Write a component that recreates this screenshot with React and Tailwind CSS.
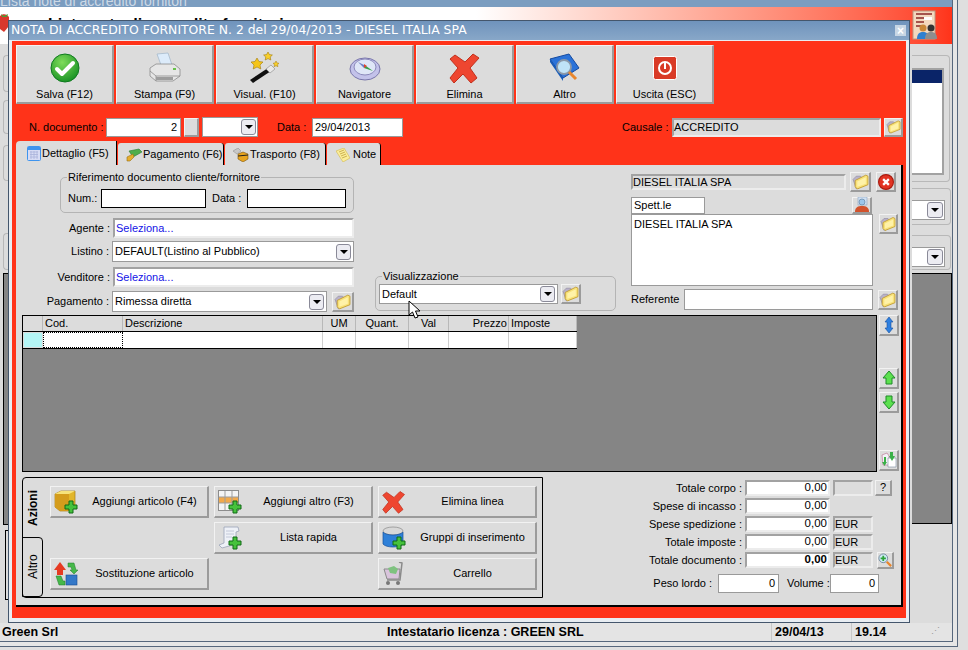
const raised = "border-t border-l border-t-[#f2f2f2] border-l-[#f2f2f2] border-b-2 border-r-2 border-b-[#9b9b9b] border-r-[#9b9b9b] bg-[#dcdcdc]";
const sunken = "border-2 border-t-[#a2a2a2] border-l-[#a2a2a2] border-b-[#ececec] border-r-[#ececec]";
const plain = "border border-[#9a9a9a] bg-white";

const Folder = ({ s = 17 }) => (
  <svg width={s} height={s} viewBox="0 0 16 16">
    <path d="M1 6l3-3h4l1 1-1 9-4 2z" fill="#b9b2c8" stroke="#8d88a0" strokeWidth=".6" />
    <path d="M3 7l10-5 2 1v8l-10 4-2-2z" fill="#f8e27a" stroke="#c09a2a" strokeWidth=".8" />
    <path d="M5 8l8-4v6l-8 3z" fill="#fff2a8" />
  </svg>
);

const Plus = ({ x = 13, y = 13 }) => (
  <g transform={`translate(${x} ${y})`}>
    <path d="M4 0h4v4h4v4H8v4H4V8H0V4h4z" fill="#46c23c" stroke="#116a16" strokeWidth="1" />
  </g>
);

const Check = () => (
  <svg width="30" height="30" viewBox="0 0 30 30">
    <defs>
      <radialGradient id="gr" cx=".4" cy=".3" r=".8">
        <stop offset="0" stopColor="#7fdc5a" />
        <stop offset="1" stopColor="#0d8a1e" />
      </radialGradient>
    </defs>
    <circle cx="15" cy="15" r="14" fill="url(#gr)" stroke="#0f7a20" />
    <path d="M7 16l5 5 11-11" fill="none" stroke="#fff" strokeWidth="4" strokeLinecap="round" strokeLinejoin="round" />
  </svg>
);

const Printer = () => (
  <svg width="32" height="32" viewBox="0 0 32 32">
    <path d="M8 2l11-1 4 12H12z" fill="#dcebfa" stroke="#9fb4c8" strokeWidth=".7" />
    <path d="M1 16l6-4h18l6 5v7l-7 5H7l-6-5z" fill="#e6e6e6" stroke="#8c8c8c" strokeWidth=".8" />
    <path d="M1 19l6 5h24M7 24v5" fill="none" stroke="#8c8c8c" strokeWidth=".8" />
    <path d="M7 25h17v3H7z" fill="#9d9d9d" />
    <rect x="24" y="16" width="3" height="2" fill="#67c24a" />
  </svg>
);

const Wand = () => (
  <svg width="32" height="32" viewBox="0 0 32 32">
    <path d="M1 28l18-12 3 3-18 12z" fill="#111" />
    <path d="M17 17l5-4 4 4-5 4z" fill="#e8e8e8" stroke="#777" strokeWidth=".5" />
    <path d="M7 5l2 3.500 4 .5-3 3 .8 4-3.800-2-3.800 2 .8-4-3-3 4-.5z" fill="#f5c518" stroke="#a07a10" strokeWidth=".6" transform="translate(1 1)" />
    <path d="M19 0l1.400 2.600 3 .4-2.200 2 .6 3-2.800-1.400-2.800 1.400.6-3-2.200-2 3-.4z" fill="#f8cf2a" stroke="#a07a10" strokeWidth=".6" />
    <path d="M27 9l1 2 2 .3-1.500 1.400.4 2-1.900-1-1.900 1 .4-2-1.500-1.400 2-.3z" fill="#f8cf2a" stroke="#a07a10" strokeWidth=".5" />
  </svg>
);

const Compass = () => (
  <svg width="32" height="28" viewBox="0 0 32 28">
    <ellipse cx="16" cy="15" rx="15" ry="11" fill="#c3c2ea" stroke="#7976aa" />
    <ellipse cx="16" cy="13" rx="11" ry="8" fill="#dfe6f7" stroke="#8c89bb" />
    <path d="M9 8l8 4-2 2z" fill="#6a7fc4" />
    <path d="M17 12l7 5-9-3z" fill="#3aa04a" />
    <path d="M15 10l3 2-3 2z" fill="#e0452d" />
  </svg>
);

const RedX = ({ s = 32 }) => (
  <svg width={s} height={s} viewBox="0 0 32 32">
    <path d="M6 3l10 7 8-8 6 4-9 10 7 10-6 5-8-9-9 9-4-5 8-10-8-9z" fill="#ee4630" stroke="#c2301c" strokeWidth="1" strokeLinejoin="round" />
  </svg>
);

const Book = () => (
  <svg width="32" height="30" viewBox="0 0 32 30">
    <path d="M1 6L20 1l10 14-16 10z" fill="#2a72d8" stroke="#144aa0" />
    <path d="M1 6l13 19v3L1 9z" fill="#155ab8" />
    <circle cx="15" cy="14" r="7" fill="#bfe3f7" stroke="#8a98a8" strokeWidth="1.800" />
    <path d="M20 19l7 7" stroke="#e8862c" strokeWidth="3" />
  </svg>
);

const Power = () => (
  <svg width="24" height="24" viewBox="0 0 24 24">
    <rect x=".5" y=".5" width="23" height="23" rx="2" fill="#d93a26" stroke="#fff" />
    <circle cx="12" cy="12" r="6" fill="none" stroke="#fff" strokeWidth="2" />
    <path d="M12 7v6" stroke="#fff" strokeWidth="2" />
  </svg>
);

const Calendar = () => (
  <svg width="14" height="15" viewBox="0 0 14 15">
    <rect x=".5" y=".5" width="13" height="14" rx="1" fill="#d7dcf4" stroke="#3f94ee" />
    <rect x="1" y="1" width="12" height="3" fill="#3f94ee" />
    <path d="M3 6h8M3 8.500h8M3 11h8M4 5v8M7 5v8M10 5v8" stroke="#aab2da" strokeWidth=".8" />
  </svg>
);

const Money = () => (
  <svg width="16" height="14" viewBox="0 0 16 14">
    <path d="M3 3l10-2 3 3-9 5z" fill="#4fae4c" stroke="#2a7a30" strokeWidth=".6" />
    <path d="M1 9l6-3 1 3-4 4H1z" fill="#e5ae2e" stroke="#98701a" strokeWidth=".6" />
  </svg>
);

const Truck = () => (
  <svg width="16" height="14" viewBox="0 0 16 14">
    <path d="M0 3l5-3 3 3-4 3z" fill="#c8c8c8" stroke="#888" strokeWidth=".5" />
    <path d="M5 6l5-2 5 2v5l-5 3-5-3z" fill="#e8a41e" stroke="#7a5410" strokeWidth=".6" />
    <path d="M5 8l10-1" stroke="#222" />
  </svg>
);

const Notes = () => (
  <svg width="14" height="14" viewBox="0 0 14 14">
    <path d="M0 3l8-3 6 10-7 4z" fill="#fbed9a" stroke="#d2b94a" strokeWidth=".6" />
    <path d="M3 4l5-2M4 6l5-2M5 8l5-2M6 10l5-2" stroke="#b89a30" strokeWidth=".7" />
  </svg>
);

const Box = () => (
  <svg width="24" height="24" viewBox="0 0 24 24">
    <path d="M1 4l6-3h14v14l-7 6H6l-5-4z" fill="#e2b62a" stroke="#a87f14" strokeWidth=".7" />
    <path d="M1 4h14v17H6l-5-4z" fill="#d49c1c" />
    <path d="M1 4l6-3h14l-6 3z" fill="#f6e27a" />
    <Plus x={11} y={11} />
  </svg>
);

const GridAdd = () => (
  <svg width="24" height="24" viewBox="0 0 24 24">
    <rect x=".5" y=".5" width="20" height="20" fill="#f4f4f4" stroke="#8c8c8c" />
    <rect x="1" y="7" width="19" height="6" fill="#f2a94a" />
    <path d="M7 1v19M14 1v19M1 7h19M1 13h19" stroke="#9d9d9d" />
    <Plus x={11} y={11} />
  </svg>
);

const Scroll = () => (
  <svg width="24" height="24" viewBox="0 0 24 24">
    <path d="M6 1h14l1 4-3 1v12l-14 4-3-3 5-2z" fill="#eef1f7" stroke="#9ba3b8" strokeWidth=".8" />
    <path d="M8 5h8M8 8h8M8 11h6" stroke="#b8bfd0" strokeWidth=".8" />
    <Plus x={11} y={11} />
  </svg>
);

const Bucket = () => (
  <svg width="24" height="24" viewBox="0 0 24 24">
    <ellipse cx="11" cy="5" rx="10" ry="4" fill="#d8d8d8" stroke="#888" strokeWidth=".7" />
    <path d="M1 6v12c3 4 17 4 20 0V6c-3 4-17 4-20 0z" fill="#2f80d8" stroke="#15509c" strokeWidth=".7" />
    <Plus x={11} y={11} />
  </svg>
);

const Swap = () => (
  <svg width="24" height="24" viewBox="0 0 24 24">
    <path d="M6 0l6 8H9v5H3V8H0z" fill="#e63a22" />
    <path d="M14 1h6l2 7h2l-4 4-4-4h2l-1-3h-3z" fill="#46b84a" stroke="#1e7a28" strokeWidth=".5" />
    <rect x="12" y="13" width="11" height="10" fill="#3478c8" stroke="#1a4c90" strokeWidth=".6" />
    <path d="M2 14h5l2 5h2v4H5z" fill="#46b84a" stroke="#1e7a28" strokeWidth=".5" />
  </svg>
);

const Cart = () => (
  <svg width="22" height="24" viewBox="0 0 22 24">
    <path d="M16 0l3 1-2 17H4" fill="none" stroke="#8a8a8a" strokeWidth="1.500" />
    <path d="M1 7h16l-1 10H4z" fill="#d9c4dc" stroke="#8a8a8a" />
    <path d="M5 6l6-2 4 3-2 5-6-1z" fill="#7fc280" />
    <circle cx="5" cy="21" r="2" fill="#777" />
    <circle cx="15" cy="21" r="2" fill="#777" />
  </svg>
);

const Person = () => (
  <svg width="16" height="16" viewBox="0 0 16 16">
    <rect x="4" y="0" width="9" height="8" fill="#cfe0f2" stroke="#8fa5bf" strokeWidth=".6" />
    <circle cx="8" cy="5" r="3" fill="#9cc6ea" stroke="#5c7a98" strokeWidth=".6" />
    <path d="M1 15c0-5 3-6 7-6s7 1 7 6z" fill="#d2522c" />
  </svg>
);

const CircleX = () => (
  <svg width="16" height="16" viewBox="0 0 14 14">
    <circle cx="7" cy="7" r="6.500" fill="#e23322" stroke="#a81c10" />
    <path d="M4.500 4.500l5 5M9.500 4.500l-5 5" stroke="#fff" strokeWidth="2" />
  </svg>
);

const ArrowV = ({ up, both }) => (
  <svg width="14" height="16" viewBox="0 0 14 16">
    {both ? (
      <path d="M7 0l4 5H9v6h2l-4 5-4-5h2V5H3z" fill="#2f80e0" stroke="#154fa0" strokeWidth=".6" />
    ) : up ? (
      <path d="M7 1l6 7H10v6H4V8H1z" fill="#5ce04e" stroke="#1e8a28" />
    ) : (
      <path d="M7 15l6-7H10V2H4v6H1z" fill="#5ce04e" stroke="#1e8a28" />
    )}
  </svg>
);

const Refresh = () => (
  <svg width="16" height="16" viewBox="0 0 16 16">
    <path d="M1 3l5-2 2 3v9H2z" fill="#f2f2f8" stroke="#b76a8a" strokeWidth=".6" />
    <path d="M7 6h8v9H7z" fill="#fff" stroke="#7a8aa0" strokeWidth=".6" />
    <path d="M9 0h3v4h2l-3 5-3-5h1z" fill="#3ab048" />
    <path d="M3 5v5H1l2.500 4L6 10H5V5z" fill="#3ab048" />
  </svg>
);

const ZoomAdd = () => (
  <svg width="16" height="16" viewBox="0 0 16 16">
    <circle cx="6" cy="6" r="5" fill="#cfeaf5" stroke="#6b8498" />
    <path d="M6 3v6M3 6h6" stroke="#2ca33a" strokeWidth="2" />
    <path d="M10 10l5 5" stroke="#e8862c" strokeWidth="2.500" />
  </svg>
);

const ToolBtn = ({ icon, label }) => (
  <button className={`${raised} w-[98px] h-[59px] flex flex-col items-center`}>
    <span className="h-[39px] mt-[2px] flex items-center justify-center">{icon}</span>
    <span className="text-[11px] leading-[14px]">{label}</span>
  </button>
);

const Arrow = ({ big }) => (
  <span className={`${big ? "w-[16px] h-[16px]" : "w-[15px] h-[16px]"} rounded-[3px] border border-[#8a8a98] bg-[#ececf2] flex items-center justify-center shrink-0`}>
    <span className="w-0 h-0 border-l-[4px] border-r-[4px] border-t-[4px] border-l-transparent border-r-transparent border-t-black" />
  </span>
);

const Select = ({ text, w, h = "h-[21px]" }) => (
  <div className={`${plain} ${w} ${h} flex items-center justify-between pl-[2px] pr-[2px] shrink-0`}>
    <span className="text-[11px] whitespace-nowrap">{text}</span>
    <Arrow />
  </div>
);

const FolderBtn = ({ w = "w-[21px]", h = "h-[20px]" }) => (
  <button className={`${raised} ${w} ${h} flex items-center justify-center shrink-0`}>
    <Folder />
  </button>
);

const IconBtn = ({ children, h = "h-[20px]", w = "w-[20px]" }) => (
  <button className={`${raised} ${w} ${h} flex items-center justify-center shrink-0`}>{children}</button>
);

const Legend = ({ children }) => (
  <span className="absolute left-[6px] -top-[8px] bg-[#dcdcdc] px-[1px] text-[11px] leading-[14px] whitespace-nowrap">{children}</span>
);

const FormRow = ({ label, className = "", children }) => (
  <div className={`flex items-center ${className}`}>
    <span className="w-[87px] pr-[3px] text-right text-[11px] whitespace-nowrap">{label}</span>
    {children}
  </div>
);

const Pick = ({ className = "" }) => (
  <div className={`${sunken} bg-white w-[241px] h-[20px] flex items-center pl-[1px] text-[11px] text-[#1414e6] ${className}`}>Seleziona...</div>
);

const ActionBtn = ({ icon, label }) => (
  <button className={`${raised} w-[159px] h-[32px] flex items-center pl-[3px]`}>
    <span className="w-[24px] flex justify-center shrink-0">{icon}</span>
    <span className="flex-1 pl-[4px] text-center text-[11px] whitespace-nowrap">{label}</span>
  </button>
);

const TotalRow = ({ label, value, bold, unit, after }) => (
  <div className="flex items-center h-[18px]">
    <span className="w-[202px] pr-[3px] text-right text-[11px] whitespace-nowrap">{label} :</span>
    <span className={`${sunken} bg-white w-[85px] h-[16px] flex items-center justify-end pr-[1px] text-[11.5px] ${bold ? "font-bold" : ""}`}>{value}</span>
    {unit !== undefined && (
      <span className={`${sunken} ml-[3px] w-[40px] h-[16px] flex items-center text-[11px]`}>{unit}</span>
    )}
    {after}
  </div>
);

const cols = [
  { t: "", w: "w-[20px]" },
  { t: "Cod.", w: "w-[80px]", left: true },
  { t: "Descrizione", w: "w-[200px]", left: true },
  { t: "UM", w: "w-[33px]" },
  { t: "Quant.", w: "w-[53px]" },
  { t: "Val", w: "w-[40px]" },
  { t: "Prezzo", w: "w-[60px]", right: true },
  { t: "Imposte", w: "w-[68px]", left: true },
];

const App = () => {
  return (
    <div className="relative w-[968px] h-[650px] overflow-hidden bg-[#dfdfdf] text-black" style={{ fontFamily: "'Liberation Sans', Arial, sans-serif" }}>
      {/* window behind the dialog */}
      <div className="w-[958px] h-[647px] border-r border-b border-[#56677c] bg-[#e6e6e6]">
        <div className="w-[953px] h-[642px] border-r border-b border-[#56677c] bg-[#dcdcdc] flex flex-col">
          <div className="h-[7px] shrink-0 overflow-hidden bg-[#7b9dc0] text-[#cdd9e6] text-[14px] leading-[8px]">
            <div className="-mt-[3px]">Lista note di accredito fornitori</div>
          </div>
          <div className="h-[37px] shrink-0 bg-gradient-to-r from-white via-white via-50% to-[#ff3319] pl-[48px] pt-[8px] text-[16px] font-bold leading-[20px] flex">
            <span>Lista note di accredito fornitori</span>
          </div>
          <div className="flex-1 flex justify-between min-h-0">
            <div className="w-[8px] flex flex-col items-end">
              <div className="w-[5px] h-[37px] mt-[11px] border border-r-0 border-[#b8b8b8] rounded-l" />
              <div className="w-[5px] h-[34px] mt-[8px] border border-r-0 border-[#b8b8b8] rounded-l" />
              <div className="w-[5px] h-[36px] mt-[11px] border border-r-0 border-[#b8b8b8] rounded-l" />
              <div className="w-[5px] h-[37px] mt-[52px] border border-r-0 border-[#b8b8b8] rounded-l" />
              <div className="w-[5px] h-[252px] mt-[3px] border border-r-0 border-black bg-[#858585]" />
              <div className="w-[3px] h-[70px] mt-[5px] border border-r-0 border-black" />
            </div>
            <div className="w-[40px] flex flex-col">
              <div className="w-[38px] h-[127px] mt-[11px] border border-l-0 border-[#b8b8b8] rounded-r pt-[12px]">
                <div className="w-[32px] h-[107px] border-2 border-l-0 border-[#a2a2a2] bg-white">
                  <div className="h-[13px] bg-[#0a2468]" />
                </div>
              </div>
              <div className="w-[39px] h-[37px] mt-[6px] border border-l-0 border-[#b8b8b8] rounded-r pt-[11px]">
                <div className={`${plain} border-l-0 w-[33px] h-[20px] flex items-center justify-end pr-[1px]`}>
                  <Arrow big />
                </div>
              </div>
              <div className="w-[39px] h-[35px] mt-[10px] border border-l-0 border-[#b8b8b8] rounded-r pt-[11px]">
                <div className={`${plain} border-l-0 w-[33px] h-[20px] flex items-center justify-end pr-[1px]`}>
                  <Arrow big />
                </div>
              </div>
              <div className="w-[40px] h-[251px] mt-[3px] border border-l-0 border-black bg-[#858585]" />
            </div>
          </div>
          <div className="h-[18px] shrink-0 flex items-center text-[12.5px] font-bold bg-[#e4e4e4]">
            <span className="w-[386px] pl-[2px]">Green Srl</span>
            <span className="w-[385px] pl-[1px] whitespace-nowrap">Intestatario licenza : GREEN SRL</span>
            <span className="w-[80px] pl-[3px] border-l border-[#c8c8c8]">29/04/13</span>
            <span className="w-[60px] pl-[3px] border-l border-[#c8c8c8]">19.14</span>
            <span className="text-[#999] pl-[20px] font-normal text-[9px]">⋰</span>
          </div>
        </div>
      </div>

      {/* strawberry and header icon, above the backdrop */}
      <svg className="absolute left-0 top-[13px]" width="9" height="20" viewBox="0 0 9 20">
        <path d="M0 3c3-3 7-2 9 1v9l-5 6-4-3z" fill="#d8382c" />
        <path d="M1 1l3 2 4-2-1 3H2z" fill="#4f9a35" />
      </svg>
      <svg className="absolute left-[912px] top-[10px]" width="26" height="30" viewBox="0 0 26 30">
        <rect x="1" y="1" width="22" height="28" fill="#f3d9bf" stroke="#b89a82" />
        <path d="M4 4h16M4 8h8M4 12h8M4 16h6" stroke="#8c2a2a" strokeWidth="1.500" />
        <rect x="12" y="7" width="8" height="3" fill="#fff" />
        <circle cx="11" cy="18" r="3.500" fill="#c9883a" />
        <path d="M5 29c0-6 3-7 6-7s6 1 6 7z" fill="#2f80d0" />
        <circle cx="19" cy="18" r="3.500" fill="#333" />
        <path d="M13 29c0-6 3-7 6-7s6 1 6 7z" fill="#8e8e8e" />
      </svg>

      {/* dialog */}
      <div className="absolute left-[8px] top-[20px] w-[902px] h-[603px] border border-[#44566c] bg-[#e8edf2] flex flex-col">
        <div className="h-[19px] shrink-0 bg-gradient-to-b from-[#6f93bc] to-[#88a7c8] flex items-center justify-between pl-[2px] pr-[3px]">
          <span className="text-[12.4px] text-white whitespace-nowrap" style={{ fontFamily: "'DejaVu Sans', sans-serif" }}>
            NOTA DI ACCREDITO FORNITORE N. 2 del 29/04/2013 - DIESEL ITALIA SPA
          </span>
          <span className="w-[11px] h-[11px] bg-[#c8d6e4] flex items-center justify-center text-white text-[12px] leading-none font-bold">×</span>
        </div>
        <div className="ml-[3px] w-[894px] h-[578px] bg-[#ff3319] pl-[4px] pt-[4px] flex flex-col border-t border-[#e8edf2]">
          <div className="flex gap-[2px]">
            <ToolBtn icon={<Check />} label="Salva (F12)" />
            <ToolBtn icon={<Printer />} label="Stampa (F9)" />
            <ToolBtn icon={<Wand />} label="Visual. (F10)" />
            <ToolBtn icon={<Compass />} label="Navigatore" />
            <ToolBtn icon={<RedX />} label="Elimina" />
            <ToolBtn icon={<Book />} label="Altro" />
            <ToolBtn icon={<Power />} label="Uscita (ESC)" />
          </div>

          <div className="flex items-center mt-[13px] h-[20px] text-[11px] whitespace-nowrap">
            <span className="ml-[13px] w-[77px]">N. documento :</span>
            <span className={`${plain} w-[75px] h-[19px] flex items-center justify-end pr-[3px]`}>2</span>
            <span className={`${raised} ml-[3px] w-[15px] h-[19px]`} />
            <span className={`${plain} ml-[3px] w-[56px] h-[20px] flex items-center justify-end pr-[1px]`}><Arrow /></span>
            <span className="ml-[19px] w-[35px]">Data :</span>
            <span className={`${plain} w-[91px] h-[19px] flex items-center pl-[2px]`}>29/04/2013</span>
            <span className="ml-[219px] w-[50px]">Causale :</span>
            <span className={`${sunken} w-[209px] h-[19px] flex items-center bg-[#dcdcdc]`}>ACCREDITO</span>
            <button className={`${raised} ml-[3px] w-[19px] h-[19px] flex items-center justify-center`}><Folder s={15} /></button>
          </div>

          <div className="flex items-end mt-[4px] h-[24px] text-[11px] whitespace-nowrap">
            <div className="w-[101px] h-[24px] bg-[#dcdcdc] rounded-tl-[4px] border-r border-black flex items-center pl-[11px] pt-[1px] gap-[1px]"><Calendar />Dettaglio (F5)</div>
            <div className="ml-[1px] w-[106px] h-[22px] bg-[#dcdcdc] rounded-t-[3px] border-r border-black flex items-center pl-[8px] pt-[1px] gap-[1px]"><Money />Pagamento (F6)</div>
            <div className="ml-[1px] w-[101px] h-[22px] bg-[#dcdcdc] rounded-t-[3px] border-r border-black flex items-center pl-[8px] pt-[1px] gap-[1px]"><Truck />Trasporto (F8)</div>
            <div className="ml-[1px] w-[54px] h-[22px] bg-[#dcdcdc] rounded-t-[3px] border-r border-black flex items-center pl-[9px] pt-[1px] gap-[3px]"><Notes />Note</div>
          </div>

          <div className="w-[887px] h-[442px] bg-[#dcdcdc] border-r-2 border-b-2 border-black pl-[6px] flex flex-col">
            <div className="flex h-[150px] shrink-0">
              <div className="w-[332px] pt-[12px]">
                <div className="relative ml-[38px] w-[294px] h-[36px] border border-[#b4b4b4] rounded-[5px] flex items-center pl-[7px] text-[11px] whitespace-nowrap">
                  <Legend>Riferimento documento cliente/fornitore</Legend>
                  <span className="w-[33px] mt-[6px]">Num.:</span>
                  <span className="w-[105px] h-[19px] mt-[6px] border border-black bg-white" />
                  <span className="ml-[6px] w-[35px] mt-[6px]">Data :</span>
                  <span className="w-[99px] h-[19px] mt-[6px] border border-black bg-white" />
                </div>
                <FormRow label="Agente :" className="mt-[5px] ml-[4px]"><Pick /></FormRow>
                <FormRow label="Listino :" className="mt-[3px] ml-[3px]"><Select text="DEFAULT(Listino al Pubblico)" w="w-[242px]" /></FormRow>
                <FormRow label="Venditore :" className="mt-[5px] ml-[4px]"><Pick /></FormRow>
                <FormRow label="Pagamento :" className="mt-[4px] ml-[3px]">
                  <Select text="Rimessa diretta" w="w-[215px]" />
                  <span className="ml-[5px]"><FolderBtn w="w-[22px]" /></span>
                </FormRow>
              </div>

              <div className="relative ml-[21px] mt-[111px] w-[241px] h-[35px] border border-[#b4b4b4] rounded-[5px] pl-[3px] pt-[7px] flex gap-[3px]">
                <Legend>Visualizzazione</Legend>
                <Select text="Default" w="w-[179px]" h="h-[20px]" />
                <FolderBtn w="w-[20px]" />
              </div>

              <div className="ml-[15px] w-[268px] pt-[7px] text-[11px] whitespace-nowrap">
                <div className="flex items-center h-[20px]">
                  <span className={`${sunken} w-[215px] h-[16px] flex items-center`}>DIESEL ITALIA SPA</span>
                  <span className="ml-[4px]"><FolderBtn /></span>
                  <span className="ml-[5px]"><IconBtn><CircleX /></IconBtn></span>
                </div>
                <div className="flex items-center justify-between h-[18px] mt-[4px] pr-[27px]">
                  <span className={`${plain} w-[74px] h-[17px] flex items-center pl-[2px]`}>Spett.le</span>
                  <IconBtn h="h-[17px]"><Person /></IconBtn>
                </div>
                <div className="flex">
                  <div className={`${plain} w-[242px] h-[72px] pl-[2px] leading-[18px]`}>DIESEL ITALIA SPA</div>
                  <span className="ml-[6px]"><FolderBtn w="w-[19px]" /></span>
                </div>
                <div className="flex items-center mt-[3px] h-[21px]">
                  <span className="w-[53px]">Referente</span>
                  <span className={`${plain} w-[189px] h-[21px]`} />
                  <span className="ml-[5px]"><FolderBtn w="w-[20px]" /></span>
                </div>
              </div>
            </div>

            <div className="flex h-[157px] shrink-0">
              <div className="w-[855px] h-[157px] bg-[#858585] border border-black">
                <div className="w-[554px] h-[33px] bg-white border-r border-b border-black text-[11px]">
                  <div className="flex h-[16px] bg-[#dcdcdc] border-b border-black">
                    {cols.map((c) => (
                      <div key={c.t} className={`${c.w} shrink-0 border-r border-[#b8b8b8] leading-[15px] whitespace-nowrap ${c.left ? "pl-[2px]" : c.right ? "text-right pr-[1px]" : "text-center"}`}>{c.t}</div>
                    ))}
                  </div>
                  <div className="flex h-[16px]">
                    {cols.map((c, i) => (
                      <div key={c.t} className={`${c.w} shrink-0 border-r border-[#cfcfcf] ${i === 0 ? "bg-[#b4f5f5] border-[#dcdcdc] border" : ""} ${i === 1 ? "border border-dotted border-black" : ""}`} />
                    ))}
                  </div>
                </div>
              </div>
              <div className="ml-[2px] flex flex-col">
                <IconBtn h="h-[21px]"><ArrowV both /></IconBtn>
                <div className="mt-[32px]"><IconBtn h="h-[21px]"><ArrowV up /></IconBtn></div>
                <div className="mt-[3px]"><IconBtn h="h-[21px]"><ArrowV /></IconBtn></div>
                <div className="mt-[37px]"><IconBtn h="h-[21px]"><Refresh /></IconBtn></div>
              </div>
            </div>

            <div className="flex mt-[5px]">
              <div className="w-[521px] h-[121px] border border-black rounded-l-[4px] flex">
                <div className="w-[21px] flex flex-col text-[12px] -ml-[1px]">
                  <div className="h-[60px] flex items-center justify-center [writing-mode:vertical-rl] rotate-180 font-bold">Azioni</div>
                  <div className="h-[61px] border border-black rounded-l-[4px] flex items-center justify-center [writing-mode:vertical-rl] rotate-180">
                    Altro
                  </div>
                </div>
                <div className="ml-[7px] mt-[8px] grid grid-cols-[159px_159px_159px] grid-rows-[32px_32px_32px] gap-x-[5px] gap-y-[4px]">
                  <ActionBtn icon={<Box />} label="Aggiungi articolo (F4)" />
                  <ActionBtn icon={<GridAdd />} label="Aggiungi altro (F3)" />
                  <ActionBtn icon={<RedX s={24} />} label="Elimina linea" />
                  <span />
                  <ActionBtn icon={<Scroll />} label="Lista rapida" />
                  <ActionBtn icon={<Bucket />} label="Gruppi di inserimento" />
                  <ActionBtn icon={<Swap />} label="Sostituzione articolo" />
                  <span />
                  <ActionBtn icon={<Cart />} label="Carrello" />
                </div>
              </div>

              <div className="pt-[2px]">
                <TotalRow label="Totale corpo" value="0,00" unit="" after={<button className={`${raised} ml-[2px] w-[17px] h-[16px] text-[11px] leading-none`}>?</button>} />
                <TotalRow label="Spese di incasso" value="0,00" />
                <TotalRow label="Spese spedizione" value="0,00" unit="EUR" />
                <TotalRow label="Totale imposte" value="0,00" unit="EUR" />
                <TotalRow label="Totale documento" value="0,00" bold unit="EUR" after={<span className="ml-[4px]"><IconBtn w="w-[17px]" h="h-[17px]"><ZoomAdd /></IconBtn></span>} />
                <div className="flex items-center mt-[5px] h-[19px] text-[11px] whitespace-nowrap">
                  <span className="w-[175px] pr-[6px] text-right">Peso lordo :</span>
                  <span className={`${plain} w-[61px] h-[19px] flex items-center justify-end pr-[3px]`}>0</span>
                  <span className="ml-[8px] w-[43px]">Volume :</span>
                  <span className={`${plain} w-[49px] h-[19px] flex items-center justify-end pr-[3px]`}>0</span>
                </div>
              </div>
            </div>
          </div>
        </div>
      </div>

      {/* mouse pointer */}
      <svg className="absolute left-[408px] top-[300px]" width="13" height="20" viewBox="0 0 13 20">
        <path d="M1 1v14l3.500-3 2.500 6 3-1-2.500-6H12z" fill="#fff" stroke="#000" />
      </svg>
    </div>
  );
};

export default App;
